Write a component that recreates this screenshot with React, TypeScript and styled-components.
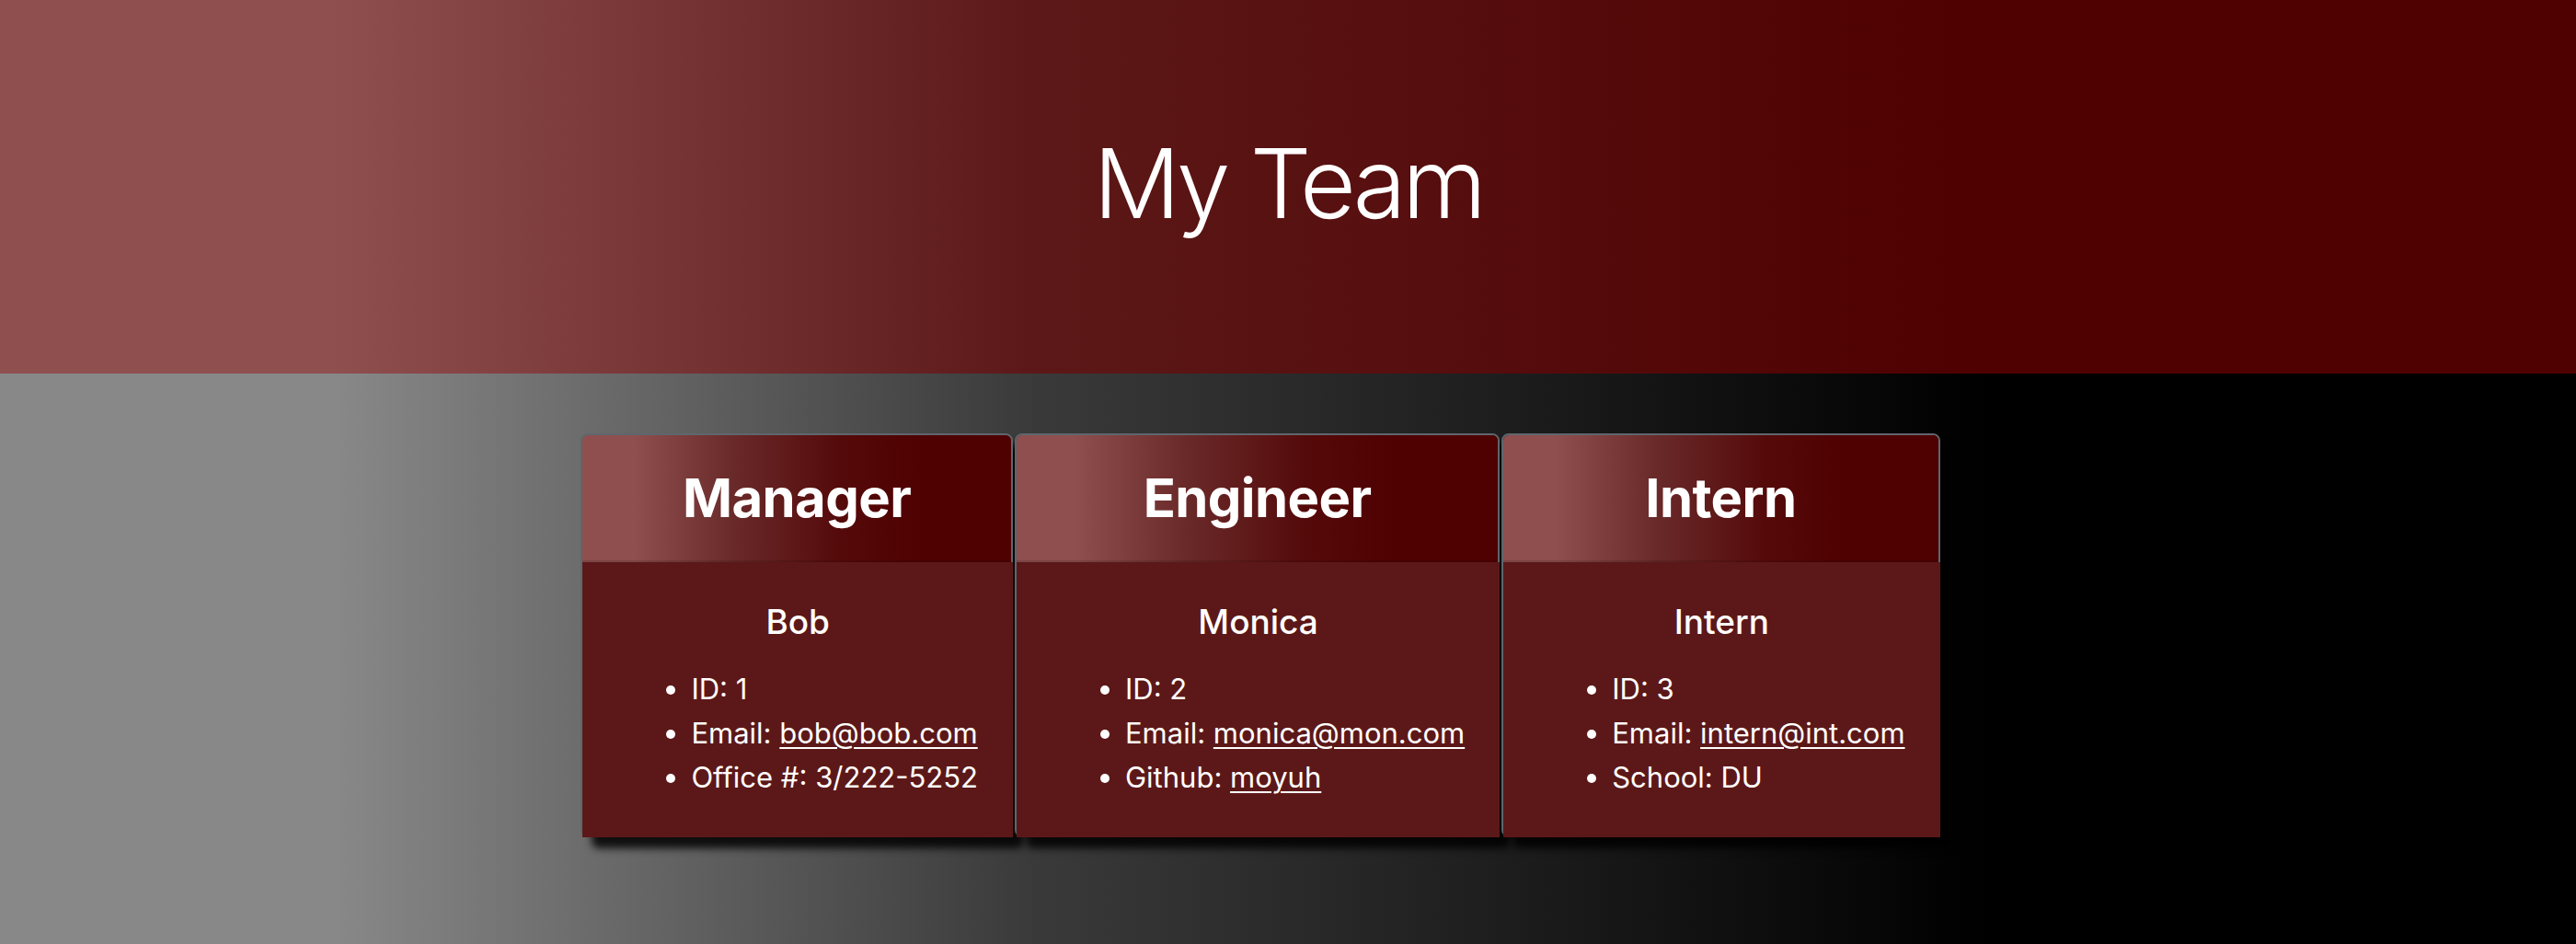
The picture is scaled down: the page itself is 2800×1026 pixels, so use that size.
import React from "react";
import styled, { createGlobalStyle } from "styled-components";

const GlobalStyle = createGlobalStyle`
  html, body {
    margin: 0;
    padding: 0;
  }
  body {
    font-family: Inter, "Noto Sans", "Liberation Sans", sans-serif;
    color: #fff;
    background: #000;
  }
  * { box-sizing: border-box; }
`;

const redGradient = `linear-gradient(90deg, #8f4f4f 13%, #5c1818 40%, #4f0000 77%)`;

const Page = styled.div`
  min-height: 100vh;
  background: linear-gradient(90deg, #888888 13%, #3a3a3a 40%, #000000 77%);
`;

const Header = styled.header`
  height: 406px;
  background: ${redGradient};
  display: flex;
  align-items: center;
  justify-content: center;
`;

const Title = styled.h1`
  margin: 0 0 8px;
  font-size: 105px;
  font-weight: 300;
  letter-spacing: -0.04em;
  line-height: 1.2;
  color: #fff;
`;

const CardRow = styled.main`
  display: flex;
  justify-content: center;
  align-items: flex-start;
  gap: 2px;
  padding: 65px 60px 0 0;
`;

const Card = styled.section`
  display: flex;
  flex-direction: column;
  border: 2px solid #5f666c;
  border-radius: 8px;
  box-shadow: 12px 12px 8px rgba(0, 0, 0, 0.85);
`;

const CardHeader = styled.div`
  background: linear-gradient(90deg, #8f4f4f 12%, #6a2a2a 35%, #550a0a 60%, #4f0000 80%);
  border-radius: 6px 6px 0 0;
  border-bottom: 2px solid rgba(0, 0, 0, 0.125);
  padding: 34px 38px 32px;
  text-align: center;
`;

const CardTitle = styled.h2`
  margin: 0;
  font-size: 58px;
  font-weight: 700;
  line-height: 1.2;
  letter-spacing: -0.01em;
`;

const CardBody = styled.div`
  background: #5c1818;
  margin: 0 -2px -2px 0;
  padding: 43px 38px 41px;
  text-align: center;
`;

const Name = styled.h3`
  margin: 0 0 27px;
  font-size: 37px;
  font-weight: 500;
  line-height: 1.2;
`;

const InfoList = styled.ul`
  display: inline-block;
  margin: 0;
  padding-left: 80px;
  text-align: left;
  font-size: 31px;
  line-height: 48px;
  white-space: nowrap;
`;

const InfoLink = styled.a`
  color: #fff;
  text-decoration: underline;
  text-underline-offset: 4px;
  text-decoration-thickness: 2px;
`;

type Member = {
  role: string;
  name: string;
  id: number;
  email: string;
  extraLabel: string;
  extraValue: string;
  extraLink?: boolean;
};

const team: Member[] = [
  { role: "Manager", name: "Bob", id: 1, email: "bob@bob.com", extraLabel: "Office #", extraValue: "3/222-5252" },
  { role: "Engineer", name: "Monica", id: 2, email: "monica@mon.com", extraLabel: "Github", extraValue: "moyuh", extraLink: true },
  { role: "Intern", name: "Intern", id: 3, email: "intern@int.com", extraLabel: "School", extraValue: "DU" },
];

export default function App() {
  return (
    <Page>
      <GlobalStyle />
      <Header>
        <Title>My Team</Title>
      </Header>
      <CardRow>
        {team.map((m) => (
          <Card key={m.id}>
            <CardHeader>
              <CardTitle>{m.role}</CardTitle>
            </CardHeader>
            <CardBody>
              <Name>{m.name}</Name>
              <InfoList>
                <li>ID: {m.id}</li>
                <li>
                  Email: <InfoLink href={`mailto:${m.email}`}>{m.email}</InfoLink>
                </li>
                <li>
                  {m.extraLabel}:{" "}
                  {m.extraLink ? (
                    <InfoLink href={`https://github.com/${m.extraValue}`}>{m.extraValue}</InfoLink>
                  ) : (
                    m.extraValue
                  )}
                </li>
              </InfoList>
            </CardBody>
          </Card>
        ))}
      </CardRow>
    </Page>
  );
}
